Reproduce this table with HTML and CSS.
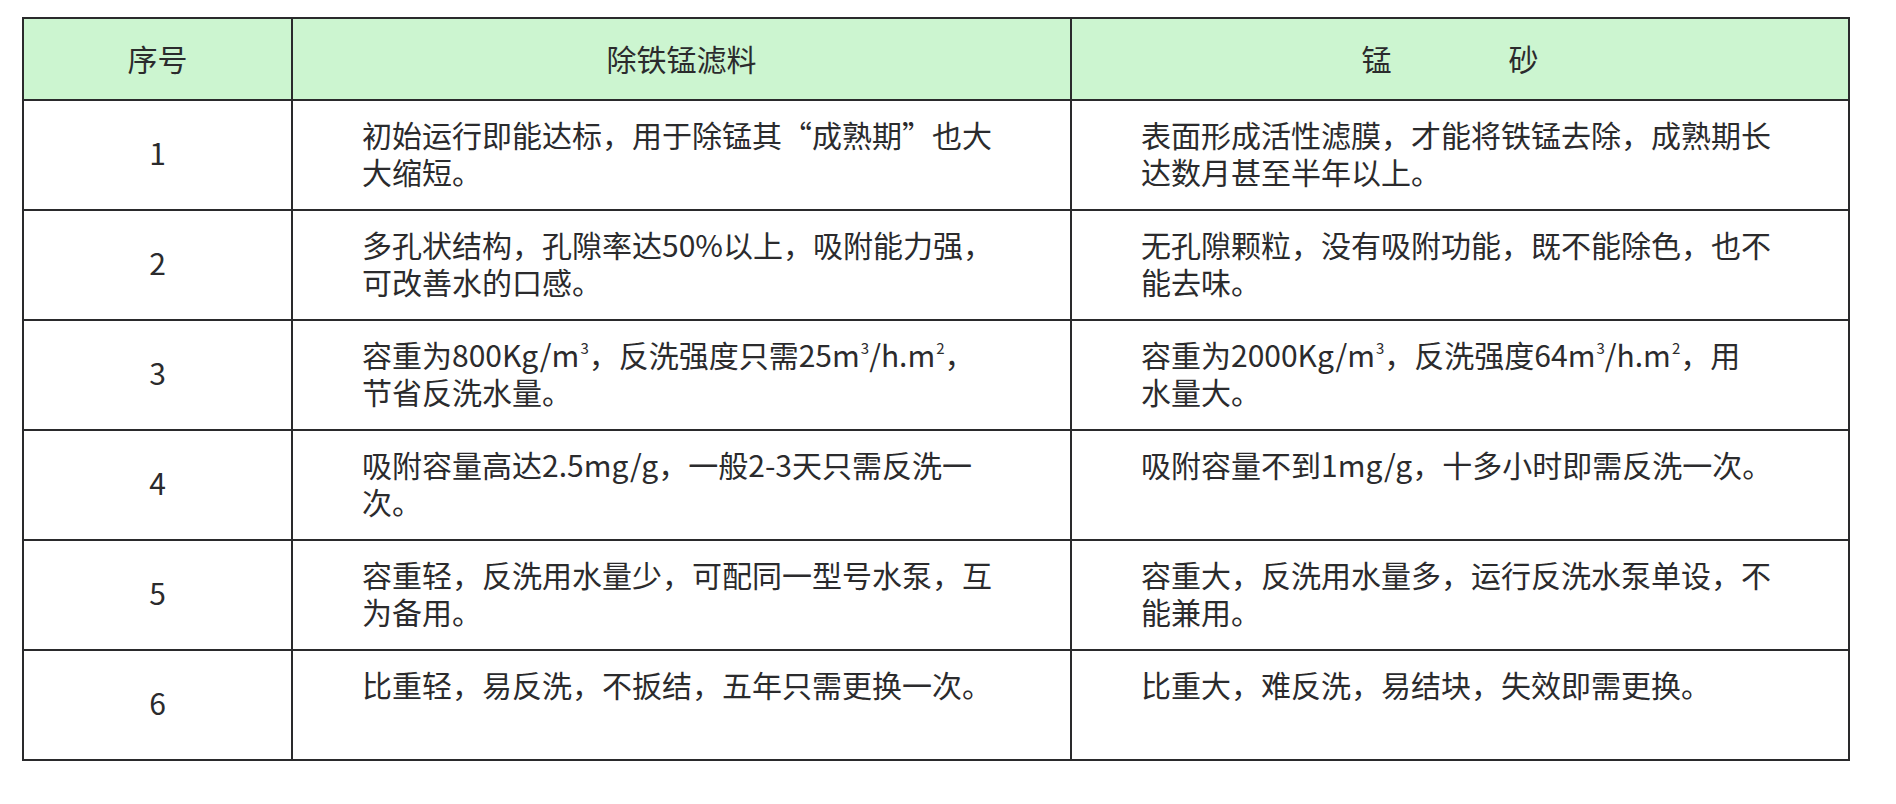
FILE: index.html
```html
<!DOCTYPE html>
<html lang="zh-CN">
<head>
<meta charset="utf-8">
<title>除铁锰滤料与锰砂对比</title>
<link rel="stylesheet" href="styles.css">
</head>
<body>
<table class="cmp">
  <colgroup>
    <col class="c-no">
    <col class="c-a">
    <col class="c-b">
  </colgroup>
  <thead>
    <tr class="head">
      <th>序号</th>
      <th>除铁锰滤料</th>
      <th class="h-sand"><span class="w1">锰</span><span>砂</span></th>
    </tr>
  </thead>
  <tbody>
    <tr>
      <td class="no">1</td>
      <td class="txt">初始运行即能达标，用于除锰其“成熟期”也大<br>大缩短。</td>
      <td class="txt">表面形成活性滤膜，才能将铁锰去除，成熟期长<br>达数月甚至半年以上。</td>
    </tr>
    <tr>
      <td class="no">2</td>
      <td class="txt">多孔状结构，孔隙率达50%以上，吸附能力强，<br>可改善水的口感。</td>
      <td class="txt">无孔隙颗粒，没有吸附功能，既不能除色，也不<br>能去味。</td>
    </tr>
    <tr>
      <td class="no">3</td>
      <td class="txt">容重为800Kg/m<sup>3</sup>，反洗强度只需25m<sup>3</sup>/h.m<sup>2</sup>，<br>节省反洗水量。</td>
      <td class="txt">容重为2000Kg/m<sup>3</sup>，反洗强度64m<sup>3</sup>/h.m<sup>2</sup>，用<br>水量大。</td>
    </tr>
    <tr>
      <td class="no">4</td>
      <td class="txt">吸附容量高达2.5mg/g，一般2-3天只需反洗一<br>次。</td>
      <td class="txt">吸附容量不到1mg/g，十多小时即需反洗一次。</td>
    </tr>
    <tr>
      <td class="no">5</td>
      <td class="txt">容重轻，反洗用水量少，可配同一型号水泵，互<br>为备用。</td>
      <td class="txt">容重大，反洗用水量多，运行反洗水泵单设，不<br>能兼用。</td>
    </tr>
    <tr>
      <td class="no">6</td>
      <td class="txt">比重轻，易反洗，不扳结，五年只需更换一次。</td>
      <td class="txt">比重大，难反洗，易结块，失效即需更换。</td>
    </tr>
  </tbody>
</table>
</body>
</html>
```
FILE: styles.css
```css
html, body {
  margin: 0;
  padding: 0;
  background: #ffffff;
}
body {
  font-family: "Noto Sans CJK SC", "Noto Sans", sans-serif;
  color: #2b2b2d;
  padding: 17px 0 0 22px;
}
.cmp {
  border-collapse: collapse;
  table-layout: fixed;
  width: 1826px;
  font-size: 30px;
  line-height: 37px;
}
.c-no { width: 269px; }
.c-a { width: 779px; }
.c-b { width: 778px; }
.cmp th,
.cmp td {
  border: 2px solid #2a2a2c;
  padding: 0;
}
.cmp .head {
  height: 82px;
}
.cmp .head th {
  background: #ccf5d0;
  font-weight: 400;
  text-align: center;
  vertical-align: middle;
  padding-bottom: 2px;
}
.cmp .head .h-sand {
  padding-right: 20px;
}
.w1 {
  margin-right: 117px;
}
.cmp tbody tr {
  height: 110px;
}
.cmp .no {
  text-align: center;
  vertical-align: middle;
  padding-bottom: 5px;
}
.cmp .txt {
  vertical-align: top;
  padding: 15px 0 0 69px;
  white-space: nowrap;
}
.cmp sup {
  font-size: 15px;
  line-height: 0;
  vertical-align: 13px;
  margin-left: 1px;
}
```
